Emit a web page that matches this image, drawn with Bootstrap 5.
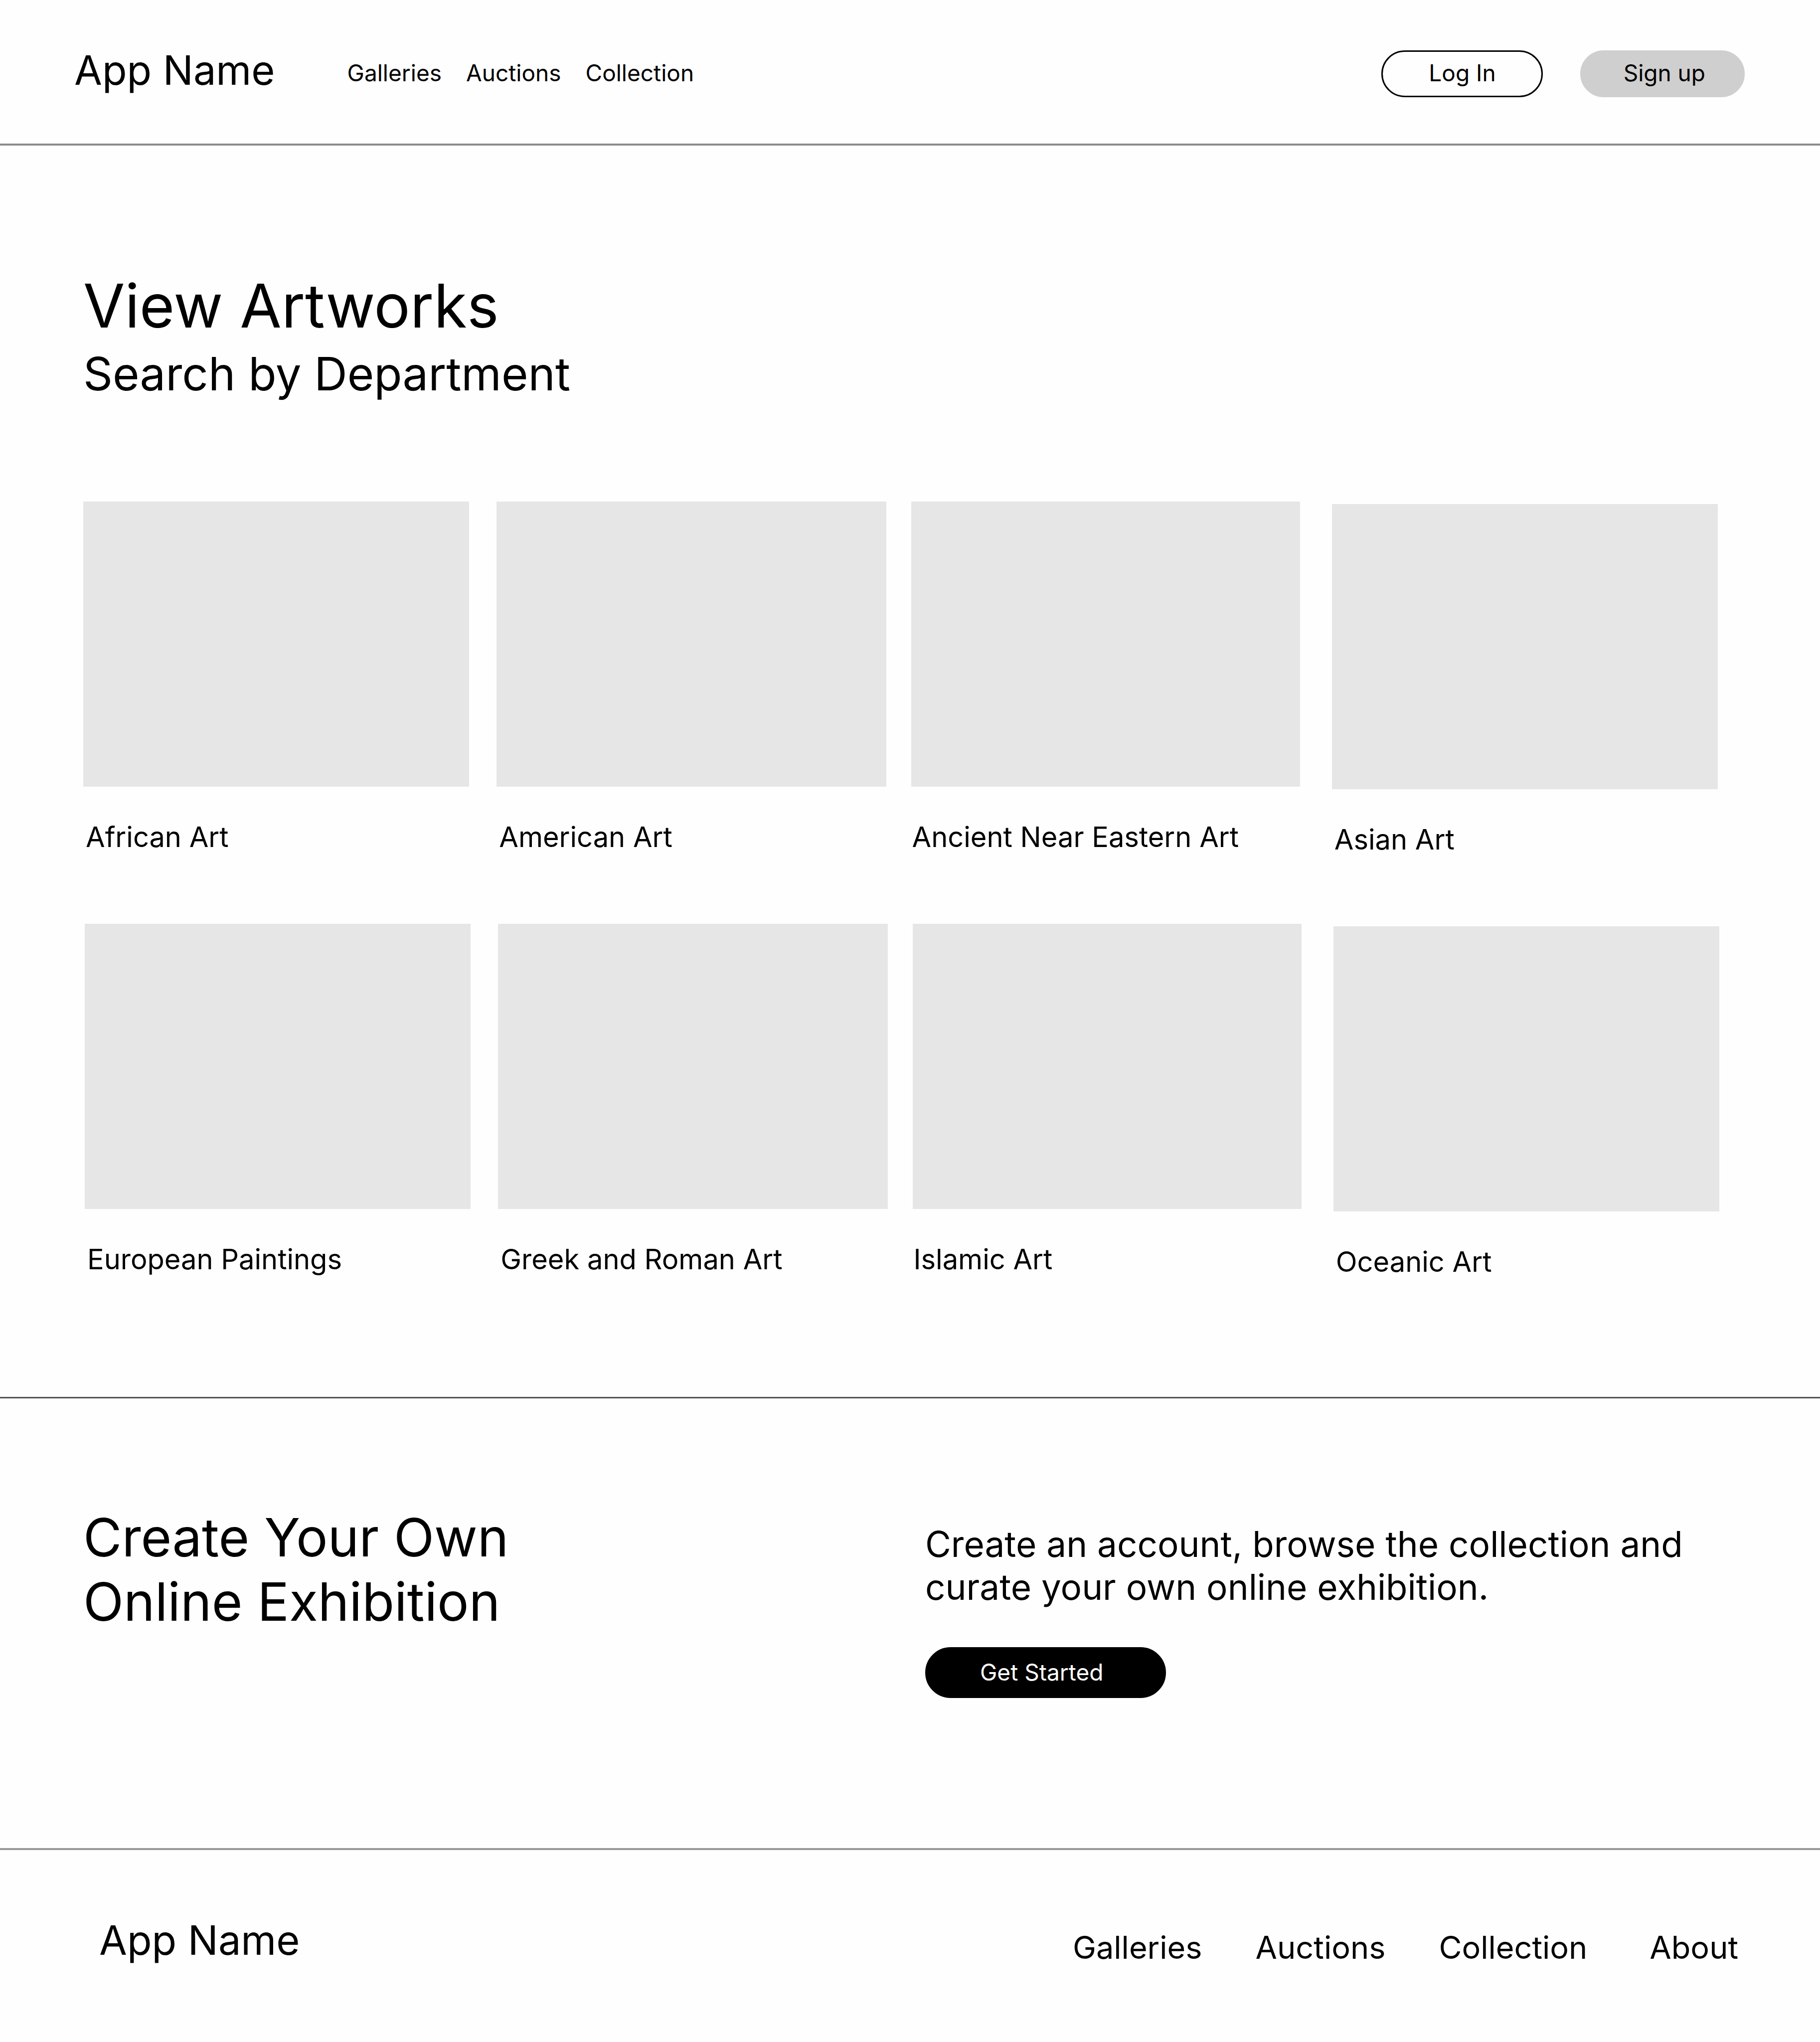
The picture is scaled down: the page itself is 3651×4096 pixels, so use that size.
<!DOCTYPE html>
<html lang="en">
<head>
<meta charset="utf-8">
<meta name="viewport" content="width=device-width, initial-scale=1">
<title>View Artworks</title>
<link rel="stylesheet" href="https://cdn.jsdelivr.net/npm/bootstrap@5.3.0/dist/css/bootstrap.min.css">
<style>
  body { font-family: Inter, "Liberation Sans", sans-serif; background: #fefefe; color: #000; }
  a { color: #000; text-decoration: none; }
  h1, h2, p { margin: 0; font-weight: 400; }

  .brand { font-size: 81px; line-height: 80px; }

  .top-bar { padding: 101px 151px 93px 149px; border-bottom: 4px solid #8c8c8c; }
  .top-links { gap: 49px; margin-left: 145px; font-size: 46px; line-height: 90px; }
  .top-actions { gap: 75px; }

  .pill { font-size: 46px; line-height: 56px; border: 3px solid #000; border-radius: 60px; color: #000; white-space: nowrap; }
  .pill-login { padding: 14px 91px 18px 92px; background: transparent; }
  .pill-signup { padding: 14px 76px 18px 84px; background: #cfcfcf; border-color: #cfcfcf; }
  .pill-start { padding: 19px 123px 21px 107px; background: #000; color: #fff; }

  .departments { padding: 244px 202px 237px 167px; border-bottom: 3px solid #525252; }
  .page-title { font-size: 121px; line-height: 154px; }
  .page-subtitle { font-size: 92px; line-height: 120px; }
  .tile-rows { margin-top: 196px; gap: 135px; }
  .tile-row { display: grid; grid-template-columns: 774fr 55fr 782fr 49fr 780fr 64fr 774fr; margin-right: 3px; }
  .tile-row.shifted { margin: 0 0 0 3px; }
  .tile:nth-child(2) { grid-column: 3; }
  .tile:nth-child(3) { grid-column: 5; }
  .tile:nth-child(4) { grid-column: 7; padding-top: 5px; }
  .tile-art { height: 572px; margin-bottom: 67px; background: #e6e6e6; }
  .tile-name { padding-left: 5px; font-size: 56px; line-height: 68px; }
  .tile:nth-child(3) .tile-name { padding-left: 2px; }

  .exhibit { padding: 214px 106px 301px 167px; border-bottom: 4px solid #999; }
  .exhibit-title { font-size: 106px; line-height: 129px; }
  .exhibit-copy { padding-top: 35px; }
  .exhibit-text { margin-bottom: 78px; font-size: 71px; line-height: 86px; }

  .foot { padding: 141px 164px 136px 199px; }
  .foot-links { gap: 107px; font-size: 63px; line-height: 108px; }
  .foot-about { margin-left: 18px; }
</style>
<script src="https://cdn.jsdelivr.net/npm/bootstrap@5.3.0/dist/js/bootstrap.bundle.min.js"></script>
</head>
<body>
<header class="top-bar d-flex align-items-start">
  <a class="brand" href="#">App Name</a>
  <nav class="top-links d-flex" aria-label="Main">
    <a href="#">Galleries</a>
    <a href="#">Auctions</a>
    <a href="#">Collection</a>
  </nav>
  <div class="top-actions d-flex ms-auto">
    <button type="button" class="pill pill-login">Log In</button>
    <button type="button" class="pill pill-signup">Sign up</button>
  </div>
</header>

<main>
  <section class="departments">
    <h1 class="page-title">View Artworks</h1>
    <h2 class="page-subtitle">Search by Department</h2>
    <div class="tile-rows d-flex flex-column">
      <div class="tile-row">
        <a class="tile d-block" href="#"><div class="tile-art"></div><div class="tile-name">African Art</div></a>
        <a class="tile d-block" href="#"><div class="tile-art"></div><div class="tile-name">American Art</div></a>
        <a class="tile d-block" href="#"><div class="tile-art"></div><div class="tile-name">Ancient Near Eastern Art</div></a>
        <a class="tile d-block" href="#"><div class="tile-art"></div><div class="tile-name">Asian Art</div></a>
      </div>
      <div class="tile-row shifted">
        <a class="tile d-block" href="#"><div class="tile-art"></div><div class="tile-name">European Paintings</div></a>
        <a class="tile d-block" href="#"><div class="tile-art"></div><div class="tile-name">Greek and Roman Art</div></a>
        <a class="tile d-block" href="#"><div class="tile-art"></div><div class="tile-name">Islamic Art</div></a>
        <a class="tile d-block" href="#"><div class="tile-art"></div><div class="tile-name">Oceanic Art</div></a>
      </div>
    </div>
  </section>

  <section class="exhibit">
    <div class="row g-0">
      <div class="col-6">
        <h2 class="exhibit-title">Create Your Own<br>Online Exhibition</h2>
      </div>
      <div class="col-6 exhibit-copy">
        <p class="exhibit-text">Create an account, browse the collection and curate your own online exhibition.</p>
        <button type="button" class="pill pill-start d-block">Get Started</button>
      </div>
    </div>
  </section>
</main>

<footer class="foot d-flex align-items-start justify-content-between">
  <a class="brand" href="#">App Name</a>
  <nav class="foot-links d-flex" aria-label="Footer">
    <a href="#">Galleries</a>
    <a href="#">Auctions</a>
    <a href="#">Collection</a>
    <a class="foot-about" href="#">About</a>
  </nav>
</footer>
</body>
</html>
